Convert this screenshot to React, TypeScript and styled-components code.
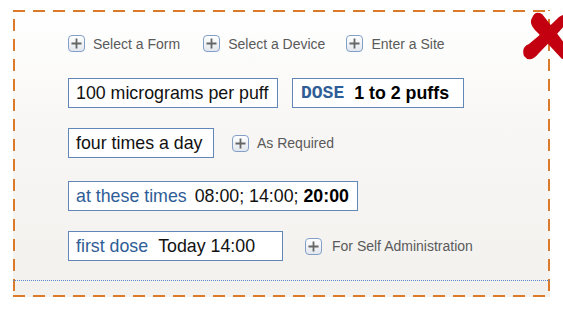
import React from 'react'
import styled, { createGlobalStyle } from 'styled-components'

const GlobalStyle = createGlobalStyle`
  html, body {
    margin: 0;
    padding: 0;
    background: #fff;
    overflow: hidden;
  }
  body {
    font-family: "Liberation Sans", Arial, sans-serif;
  }
`

const orange = '#db7a2b'

function PlusIcon() {
  return (
    <svg width="17" height="17" viewBox="0 0 17 17">
      <defs>
        <linearGradient id="plusFill" x1="0" y1="0" x2="0" y2="1">
          <stop offset="0" stopColor="#ffffff" />
          <stop offset="1" stopColor="#e2e7ee" />
        </linearGradient>
      </defs>
      <rect x="0.5" y="0.5" width="16" height="16" rx="3.5" fill="url(#plusFill)" stroke="#839fc6" />
      <path d="M8.5 3.5v10M3.5 8.5h10" stroke="#666" strokeWidth="1.8" />
    </svg>
  )
}

function RedCross() {
  return (
    <svg width="48" height="54" viewBox="0 0 48 54">
      <path
        d="M11 9 Q14 1 21 5 Q30 16 46 38 Q50 48 41 50 Q28 36 17 24 Q7 15 11 9 Z"
        fill="#c3000f"
      />
      <path
        d="M3 47 Q0 38 8 35 Q25 21 38 8 Q47 2 48 11 Q34 28 18 44 Q9 55 3 47 Z"
        fill="#c3000f"
      />
    </svg>
  )
}

export default function App() {
  return (
    <>
      <GlobalStyle />
      <Page>
        <Panel>
          <Toolbar>
            <AddLink>
              <PlusIcon />
              Select a Form
            </AddLink>
            <AddLink $ml={23}>
              <PlusIcon />
              Select a Device
            </AddLink>
            <AddLink $ml={21}>
              <PlusIcon />
              Enter a Site
            </AddLink>
          </Toolbar>

          <Row $mt={26}>
            <Field $w={210}>100 micrograms per puff</Field>
            <Field $w={172} $ml={14}>
              <Code>DOSE</Code>
              <Strong>1 to 2 puffs</Strong>
            </Field>
          </Row>

          <Row $mt={20}>
            <Field $w={146}>four times a day</Field>
            <AddLink $ml={18}>
              <PlusIcon />
              As Required
            </AddLink>
          </Row>

          <Row $mt={23}>
            <Field $w={290}>
              <Label>at these times</Label>
              08:00; 14:00; <Strong>20:00</Strong>
            </Field>
          </Row>

          <Row $mt={20}>
            <Field $w={215}>
              <Label $gap={10}>first dose</Label>
              Today 14:00
            </Field>
            <AddLink $ml={22} $gap={10}>
              <PlusIcon />
              For Self Administration
            </AddLink>
          </Row>

          <Footer />
          <Cross>
            <RedCross />
          </Cross>
        </Panel>
      </Page>
    </>
  )
}

const Page = styled.div`
  padding: 10px 0 0 13px;
  width: 563px;
  height: 309px;
  box-sizing: border-box;
`

const Panel = styled.section`
  position: relative;
  width: 537px;
  height: 287px;
  box-sizing: border-box;
  padding: 25px 0 0 55px;
  display: flex;
  flex-direction: column;
  background:
    linear-gradient(to right, ${orange} 60%, transparent 0) 0 0 / 20px 2px repeat-x,
    linear-gradient(to right, ${orange} 60%, transparent 0) 0 100% / 20px 2px repeat-x,
    linear-gradient(to bottom, ${orange} 60%, transparent 0) 0 9px / 2px 20px repeat-y,
    linear-gradient(to bottom, ${orange} 60%, transparent 0) 100% 9px / 2px 20px repeat-y,
    linear-gradient(to bottom, #ffffff 0%, #f7f6f4 45%, #f2f1ee 100%);
`

const Toolbar = styled.div`
  display: flex;
  align-items: center;
  height: 17px;
`

const AddLink = styled.span<{ $ml?: number; $gap?: number }>`
  display: inline-flex;
  align-items: center;
  gap: ${(p) => p.$gap ?? 8}px;
  margin-left: ${(p) => p.$ml ?? 0}px;
  font-size: 14px;
  color: #5a5a5a;
  white-space: nowrap;

  svg {
    flex: none;
  }
`

const Row = styled.div<{ $mt: number }>`
  display: flex;
  align-items: center;
  margin-top: ${(p) => p.$mt}px;
`

const Field = styled.div<{ $w: number; $ml?: number }>`
  width: ${(p) => p.$w}px;
  height: 30px;
  box-sizing: border-box;
  display: inline-flex;
  align-items: center;
  margin-left: ${(p) => p.$ml ?? 0}px;
  padding: 0 0 0 7px;
  border: 1px solid #6187b8;
  background: #fff;
  font-size: 17.8px;
  color: #111;
  white-space: pre;
  overflow: hidden;
`

const Label = styled.span<{ $gap?: number }>`
  color: #2f5d96;
  margin-right: ${(p) => p.$gap ?? 8}px;
`

const Code = styled.span`
  font-family: "Liberation Mono", "Courier New", monospace;
  font-weight: bold;
  font-size: 18px;
  color: #2f5d96;
  margin-left: 1px;
  margin-right: 10px;
`

const Strong = styled.b`
  font-weight: bold;
  color: #000;
`

const Footer = styled.div`
  margin-top: auto;
  margin-left: -55px;
  height: 16px;
  border-top: 1px dotted #5b87c5;
`

const Cross = styled.div`
  position: absolute;
  top: -1px;
  left: 508px;
  line-height: 0;
`
